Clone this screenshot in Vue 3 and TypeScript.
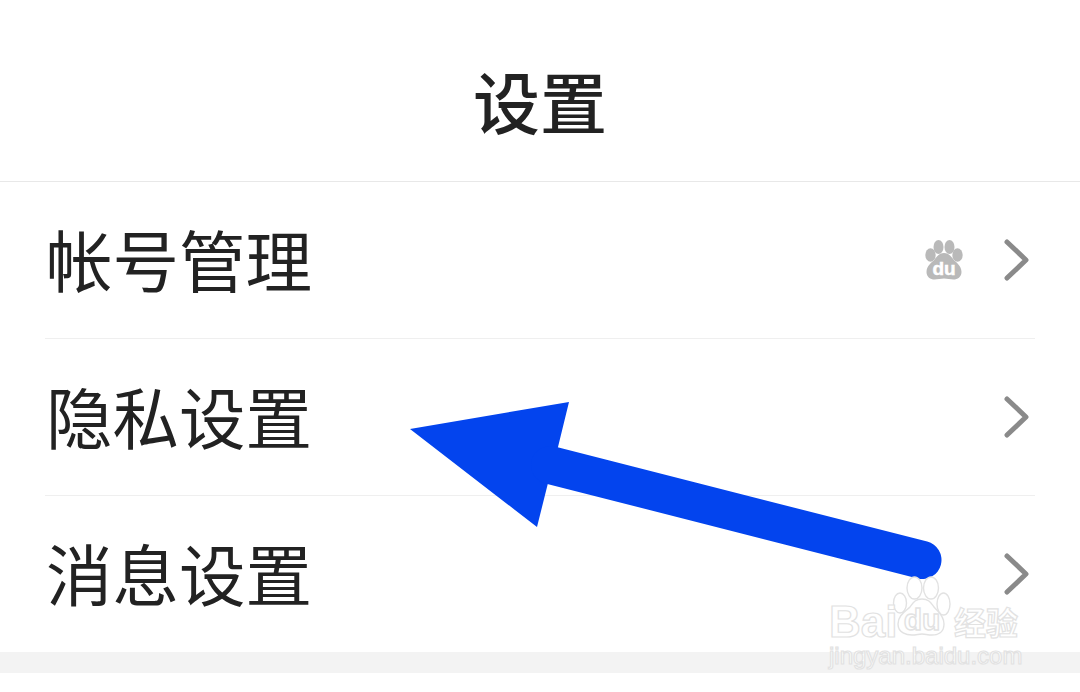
<template>
  <div class="page">
    <header class="title-bar">
      <h1 class="title">设置</h1>
    </header>
    <ul class="list">
      <li v-for="row in rows" :key="row.label" class="row">
        <span class="label">{{ row.label }}</span>
        <svg v-if="row.paw" class="paw" viewBox="0 0 38 40" aria-hidden="true">
          <ellipse cx="5.5" cy="15" rx="5.2" ry="6.8" />
          <ellipse cx="13.5" cy="7" rx="5" ry="7" />
          <ellipse cx="24.5" cy="7" rx="5" ry="7" />
          <ellipse cx="32.5" cy="15" rx="5.2" ry="6.8" />
          <path d="M19 13c4.500 0 6.500 3 9.500 6.500 2.500 3 8 6 8 12.500 0 5-4 7.500-8 7.500-3 0-6.500-1-9.500-1s-6.500 1-9.500 1c-4 0-8-2.500-8-7.500 0-6.500 5.500-9.500 8-12.500 3-3.500 5-6.500 9.500-6.500z" />
          <text x="19" y="35" class="du">du</text>
        </svg>
        <svg class="chevron" viewBox="0 0 26 42" aria-hidden="true">
          <path d="M4 3 L23 21 L4 39" />
        </svg>
      </li>
    </ul>
    <div class="footer-band"></div>

    <svg class="arrow" viewBox="0 0 1080 692" aria-hidden="true">
      <path class="arrow-head" d="M410 429 L569 402 L558 447 L548 483 L537 527 Z" />
      <path class="arrow-shaft" d="M550 465 L922.500 560" />
    </svg>

    <div class="watermark">
      <svg class="mark-paw" viewBox="0 0 60 62" aria-hidden="true">
        <ellipse cx="8" cy="27" rx="6.500" ry="10" />
        <ellipse cx="22.500" cy="12" rx="7.500" ry="11" />
        <ellipse cx="39" cy="12" rx="7.500" ry="11" />
        <ellipse cx="51.500" cy="28" rx="6.500" ry="11" />
        <path d="M30 23c7 0 9 4 12 8 3 4 10 8 10 17 0 9-7 11-12 11-4 0-7-1-10-1s-6 1-10 1c-5 0-14-2-14-11 0-9 8-13 12-17 3-4 5-8 12-8z" />
        <text x="30" y="54" class="mark-du">du</text>
      </svg>
      <div class="mark-brand">Bai</div>
      <div class="mark-cn">经验</div>
      <div class="mark-url">jingyan.baidu.com</div>
    </div>
  </div>
</template>

<script setup lang="ts">
interface Row {
  label: string
  paw?: boolean
}

const rows: Row[] = [
  { label: '帐号管理', paw: true },
  { label: '隐私设置' },
  { label: '消息设置' }
]
</script>

<style>
html,
body {
  background: #fff;
}
</style>

<style scoped>
.page {
  position: relative;
  width: 1080px;
  height: 692px;
  overflow: hidden;
  background: #fff;
  font-family: "Noto Sans CJK SC", "Noto Sans", sans-serif;
  color: #222;
}

.title-bar {
  display: flex;
  align-items: center;
  justify-content: center;
  padding-top: 18px;
  height: 163px;
  border-bottom: 1px solid #e8e8e8;
}

.title {
  margin: 0;
  font-size: 67px;
  font-weight: 500;
  line-height: 1;
}

.list {
  list-style: none;
  margin: 0;
  padding: 0 45px;
}

.row {
  height: 156px;
  display: flex;
  align-items: center;
  border-bottom: 1px solid #efefef;
}

.row:last-child {
  border-bottom: none;
}

.label {
  flex: 1;
  font-size: 66.5px;
  line-height: 1;
  margin-left: 1px;
  padding-bottom: 3px;
}

.paw {
  width: 38px;
  height: 40px;
  margin-right: 40px;
  fill: #b9b9b9;
}

.du {
  font-family: "Liberation Sans", sans-serif;
  font-size: 19px;
  font-weight: 700;
  fill: #fff;
  stroke: #fff;
  stroke-width: 0.5;
  text-anchor: middle;
}

.chevron {
  width: 26px;
  height: 42px;
  margin-right: 6px;
  fill: none;
  stroke: #8a8a8a;
  stroke-width: 5;
  stroke-linecap: round;
  stroke-linejoin: round;
}

.footer-band {
  height: 21px;
  background: #f3f3f3;
}

.arrow {
  position: absolute;
  inset: 0;
  width: 1080px;
  height: 692px;
}

.arrow-head {
  fill: #0344ee;
}

.arrow-shaft {
  fill: none;
  stroke: #0344ee;
  stroke-width: 38;
  stroke-linecap: round;
}

.watermark {
  position: absolute;
  left: 828px;
  top: 576px;
  width: 200px;
  height: 96px;
  font-family: "Liberation Sans", sans-serif;
  color: #fff;
  -webkit-text-stroke: 1.2px #e2e2e2;
}

.mark-paw {
  position: absolute;
  left: 64px;
  top: 0;
  width: 60px;
  height: 62px;
  fill: #fff;
  stroke: #e2e2e2;
  stroke-width: 1.400;
}

.mark-du {
  font-size: 30px;
  font-weight: 700;
  text-anchor: middle;
}

.mark-brand {
  position: absolute;
  left: 1px;
  top: 24px;
  font-size: 44px;
  font-weight: 700;
  line-height: 44px;
  white-space: nowrap;
}

.mark-cn {
  position: absolute;
  left: 126px;
  top: 25px;
  font-family: "Noto Sans CJK SC", sans-serif;
  font-size: 32px;
  font-weight: 700;
  line-height: 40px;
  white-space: nowrap;
}

.mark-url {
  position: absolute;
  left: 1px;
  top: 66px;
  font-size: 24px;
  line-height: 28px;
  white-space: nowrap;
}
</style>
